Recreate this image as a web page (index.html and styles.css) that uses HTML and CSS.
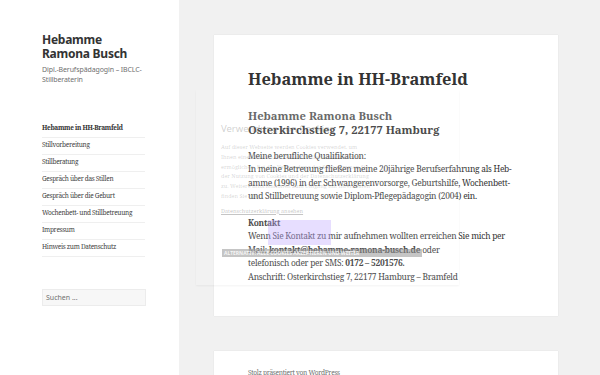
FILE: index.html
```html
<!DOCTYPE html>
<html lang="de">
<head>
    <meta charset="UTF-8">
    <title>Hebamme Ramona Busch</title>
    <link rel="stylesheet" href="styles.css">
</head>
<body>
    <div class="page">
        <aside class="sidebar">
            <div class="site-title">Hebamme<br>Ramona Busch</div>
            <p class="site-description">Dipl.-Berufspädagogin – IBCLC-Stillberaterin</p>
            <ul class="main-nav">
                <li class="current">Hebamme in HH-Bramfeld</li>
                <li>Stillvorbereitung</li>
                <li>Stillberatung</li>
                <li>Gespräch über das Stillen</li>
                <li>Gespräch über die Geburt</li>
                <li>Wochenbett- und Stillbetreuung</li>
                <li>Impressum</li>
                <li>Hinweis zum Datenschutz</li>
            </ul>
            <div class="search-field">Suchen ...</div>
        </aside>

        <main class="content">
            <article class="card entry">
                <h1 class="entry-title">Hebamme in HH-Bramfeld</h1>
                <h3 class="entry-sub"><span class="sub-name">Hebamme Ramona Busch</span><br>Osterkirchstieg 7, 22177 Hamburg</h3>
                <p>Meine berufliche Qualifikation:<br>
                In meine Betreuung fließen meine 20jährige Berufserfahrung als Heb-<br>amme (1996) in der Schwangerenvorsorge, Geburtshilfe, Wochenbett-<br>und Stillbetreuung sowie Diplom-Pflegepädagogin (2004) ein.</p>
                <p><strong>Kontakt</strong><br>
                Wenn Sie Kontakt zu mir aufnehmen wollten erreichen Sie mich per<br>
                Mail: <strong class="mail">kontakt@hebamme-ramona-busch.de</strong> oder<br>
                telefonisch oder per SMS: <strong>0172 – 5201576.</strong><br>
                Anschrift: Osterkirchstieg 7, 22177 Hamburg – Bramfeld</p>
            </article>
            <footer class="card site-footer">Stolz präsentiert von WordPress</footer>
        </main>
    </div>

    <!-- privacy popup, still fading in -->
    <div class="privacy-popup">
        <div class="popup-title">Verwendung von Cookies</div>
        <p class="popup-text">Auf dieser Webseite werden Cookies verwendet, um Ihnen einen Besuch der Seite mit allen Funktionen zu ermöglichen. Bei der Verwendung der Seite stimmen Sie der Nutzung von Cookies und der Datenschutzerklärung zu. Weitere Informationen zum Umgang mit Ihren Daten finden Sie hier.</p>
        <div class="popup-link">Datenschutzerklärung ansehen</div>
        <div class="popup-mark"></div>
        <div class="popup-button">ALTERNATIV: ALLE COOKIES AKZEPTIEREN UND WEITER</div>
    </div>
</body>
</html>
```

FILE: styles.css
```css
body {
    margin: 0;
    background-color: #f1f1f1;
    font-family: "Noto Serif", "DejaVu Serif", serif;
    color: #333333;
    position: relative;
    height: 375px;
    overflow: hidden;
}
.page {
    display: flex;
    align-items: flex-start;
}
.sidebar {
    width: 137px;
    min-height: 375px;
    background: #ffffff;
    padding: 33px 0 0 42px;
    box-sizing: content-box;
}
.site-title {
    font-family: "Noto Sans", sans-serif;
    font-weight: bold;
    font-size: 12px;
    letter-spacing: -0.25px;
    line-height: 14px;
    color: #333333;
}
.site-description {
    font-family: "Noto Sans", sans-serif;
    font-size: 7px;
    letter-spacing: -0.1px;
    line-height: 10px;
    color: #707070;
    margin: 4px 0 0;
    width: 110px;
}
.main-nav {
    list-style: none;
    margin: 36px 0 0;
    padding: 0;
    width: 103px;
    font-size: 6.5px;
    letter-spacing: -0.3px;
}
.main-nav li {
    height: 16px;
    line-height: 14px;
    border-bottom: 1px solid #efefef;
    white-space: nowrap;
    color: #444444;
}
.main-nav li.current {
    font-weight: bold;
    color: #333333;
}
.search-field {
    margin-top: 32px;
    width: 99px;
    height: 15px;
    line-height: 15px;
    padding-left: 3px;
    background: #f7f7f7;
    border: 1px solid #ececec;
    font-family: "Noto Sans", sans-serif;
    font-size: 7px;
    color: #707070;
}
.content {
    padding: 35px 0 0 35px;
}
.card {
    width: 276px;
    background: #ffffff;
    padding: 0 34px;
    box-shadow: 0 0 1px rgba(0, 0, 0, 0.12);
}
.entry {
    padding-top: 32px;
    padding-bottom: 33px;
    font-size: 8.4px;
    letter-spacing: -0.25px;
    line-height: 13.4px;
    white-space: nowrap;
}
.entry-title {
    font-size: 16.4px;
    letter-spacing: 0;
    line-height: 24px;
    margin: 0 0 18px;
}
.entry-sub {
    font-size: 11.2px;
    letter-spacing: 0;
    line-height: 14px;
    margin: 0 0 12px;
    color: #333333;
}
.sub-name {
    color: #555555;
}
.entry p {
    margin: 0 0 13.4px;
}
.entry p:last-child {
    margin-bottom: 0;
}
.site-footer {
    margin-top: 35px;
    padding-top: 17px;
    height: 40px;
    font-size: 6.6px;
    letter-spacing: -0.3px;
    color: #707070;
}
.privacy-popup {
    position: absolute;
    left: 196px;
    top: 90px;
    width: 226px;
    height: 195px;
    padding: 0 12px 0 25px;
    background: rgba(255, 255, 255, 0.12);
    box-shadow: 0 1px 2px rgba(0, 0, 0, 0.05);
    box-sizing: content-box;
}
.popup-title {
    margin-top: 32px;
    font-family: "Noto Sans", sans-serif;
    font-size: 9.5px;
    color: rgba(120, 120, 120, 0.35);
}
.popup-text {
    margin: 8px 0 0;
    width: 150px;
    font-size: 5.5px;
    line-height: 9.8px;
    color: rgba(120, 120, 120, 0.3);
}
.popup-link {
    margin-top: 5px;
    font-size: 5.5px;
    color: rgba(110, 110, 110, 0.4);
    text-decoration: underline;
}
.popup-mark {
    margin: 5px 0 0 47px;
    width: 63px;
    height: 25px;
    background: rgba(185, 160, 255, 0.35);
}
.popup-button {
    margin: 4px 0 0 1px;
    width: 198px;
    height: 8px;
    line-height: 8px;
    background: rgba(150, 150, 150, 0.55);
    color: rgba(255, 255, 255, 0.85);
    font-family: "Noto Sans", sans-serif;
    font-size: 5px;
    font-weight: bold;
    white-space: nowrap;
    overflow: hidden;
    padding-left: 2px;
}
```
